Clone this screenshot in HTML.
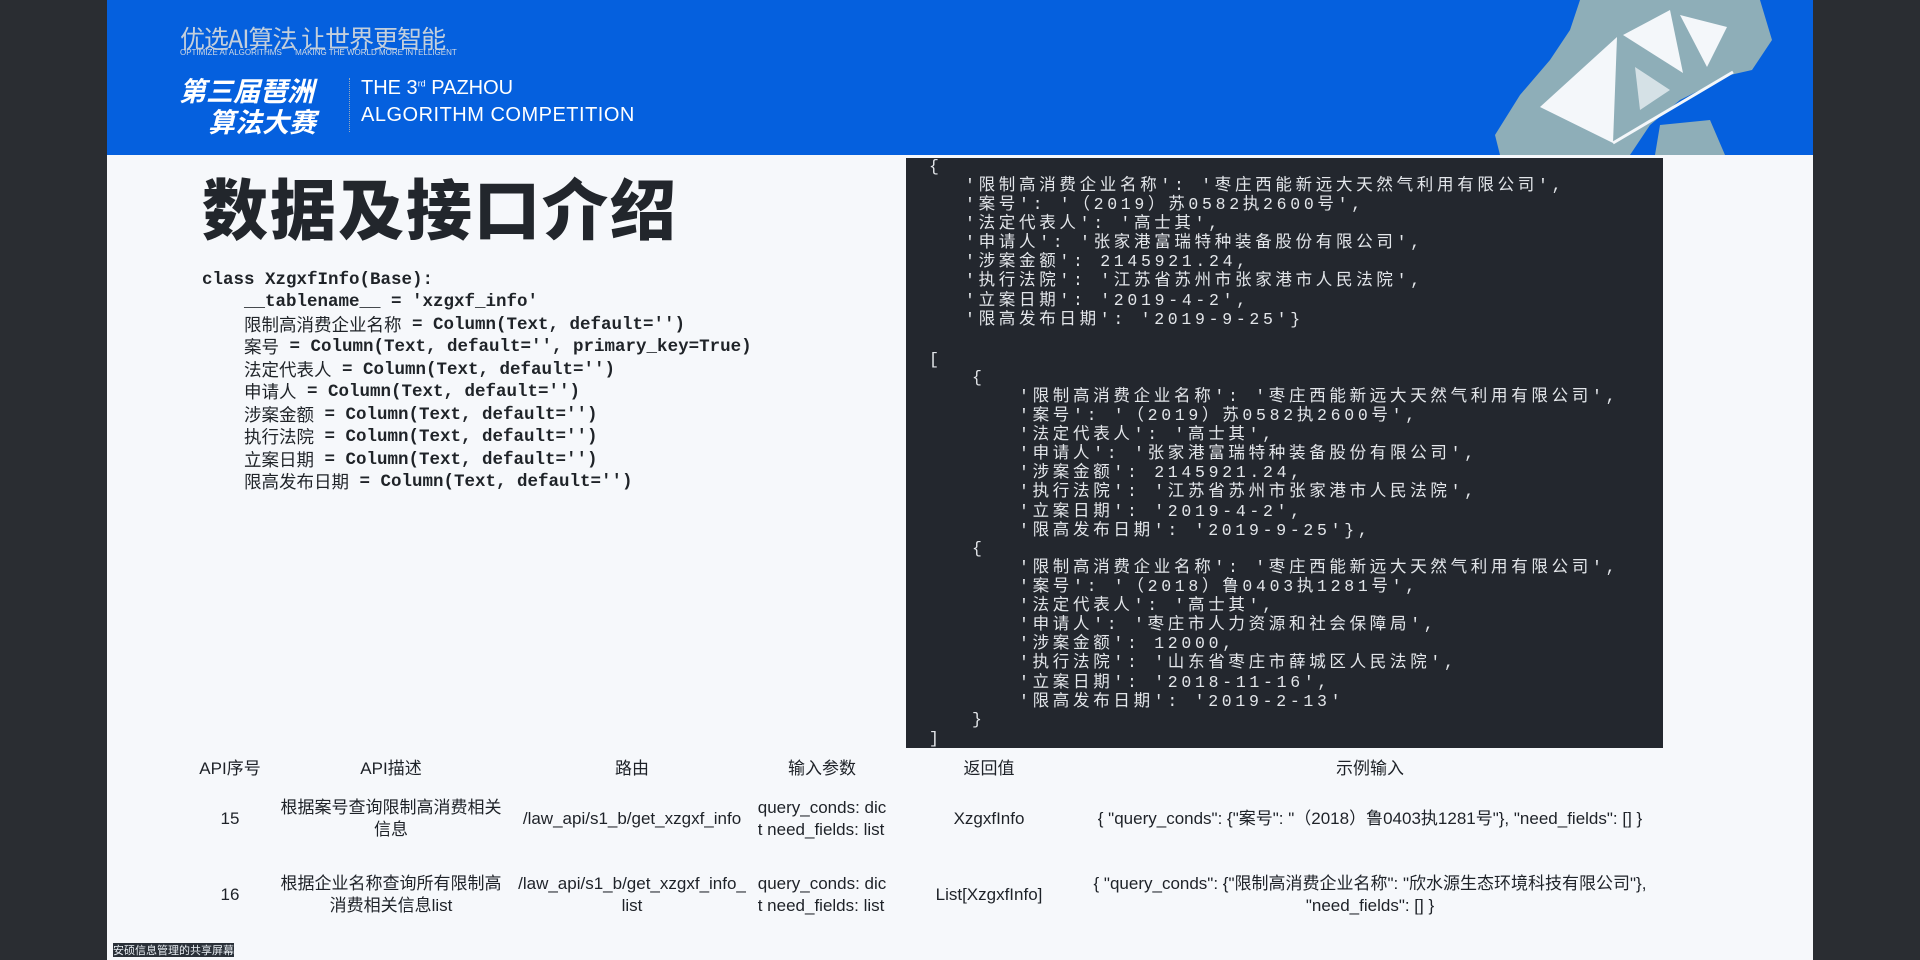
<!DOCTYPE html>
<html><head><meta charset="utf-8"><style>
*{margin:0;padding:0;box-sizing:border-box}
body{width:1920px;height:960px;background:#2a2d32;position:relative;overflow:hidden;font-family:"Liberation Sans","Noto Sans CJK SC",sans-serif}
#slide{position:absolute;left:107px;top:0;width:1706px;height:960px;background:#f6f8fb}
#hdr{position:absolute;left:0;top:0;width:1706px;height:155px;background:#0560de;overflow:hidden}
.a{position:absolute;white-space:pre}
#code{position:absolute;left:906px;top:158px;width:757px;height:590px;background:#23272e}
.pl{position:absolute;white-space:pre;color:#e3e6ea;font-family:"Liberation Mono","Noto Sans CJK SC",monospace;font-size:16.5px;letter-spacing:3.7px;line-height:19.1px}
.lc{position:absolute;white-space:pre;color:#1f2328;font-size:17.5px;font-weight:bold;font-family:"Liberation Mono","Noto Sans CJK SC",monospace;line-height:22px;height:22px}
.lc span{font-weight:normal;font-family:"Noto Sans CJK SC",sans-serif;display:inline-block;height:22px;line-height:22px;vertical-align:top}
.t{position:absolute;color:#1e2228;font-family:"Liberation Sans Narrow","Liberation Sans","Noto Sans CJK SC",sans-serif;font-size:17px;text-align:center;line-height:22px;transform:translateX(-50%);white-space:nowrap}
</style></head><body>
<div id="slide">
<div id="hdr">
 <div class="a" style="left:73px;top:20px;font-size:25px;color:#c3cfdc;letter-spacing:-1px;font-family:'Noto Sans CJK SC',sans-serif">优选AI算法 让世界更智能</div>
 <div class="a" style="left:73px;top:48px;font-size:8px;color:#d0d9e4">OPTIMIZE AI ALGORITHMS      MAKING THE WORLD MORE INTELLIGENT</div>
 <div class="a" style="left:72px;top:70px;font-size:27px;font-weight:bold;color:#fff;font-family:'Noto Sans CJK SC',sans-serif;font-style:italic">第三届琶洲</div>
 <div class="a" style="left:101px;top:101px;font-size:27px;font-weight:bold;color:#fff;font-family:'Noto Sans CJK SC',sans-serif;font-style:italic">算法大赛</div>
 <div style="position:absolute;left:242px;top:78px;height:54px;border-left:1px dotted #9ab"></div>
 <div class="a" style="left:254px;top:77px;font-size:20px;color:#fff">THE 3<sup style="font-size:9px">rd</sup> PAZHOU</div>
 <div class="a" style="left:254px;top:104px;font-size:20px;color:#fff;letter-spacing:0.5px">ALGORITHM COMPETITION</div>
 <svg style="position:absolute;left:1373px;top:0" width="333" height="155" viewBox="0 0 333 155">
  <path d="M100 0 L280 0 L292 40 L272 70 L250 75 L200 100 L170 125 L150 155 L20 155 L15 135 L40 95 L70 60 L90 30 Z" fill="#8eaeb8"/>
  <path d="M180 125 L230 120 L245 155 L175 155 Z" fill="#8eaeb8"/>
  <path d="M60 107 L137 37 L133 143 Z" fill="#f4f7fa"/>
  <path d="M143 35 L203 73 L190 10 Z" fill="#f4f7fa"/>
  <path d="M200 15 L227 67 L247 27 Z" fill="#f4f7fa"/>
  <path d="M155 67 L190 90 L160 110 Z" fill="#f4f7fa" opacity=".7"/>
  <path d="M133 143 L253 72" stroke="#f4f7fa" stroke-width="3"/>
 </svg>
</div>
<div class="a" style="left:95px;top:158px;font-size:66px;font-weight:900;color:#22262c;font-family:'Noto Sans CJK SC',sans-serif;letter-spacing:2px">数据及接口介绍</div>
</div>
<div class="lc" style="left:202px;top:269px">class XzgxfInfo(Base):</div>
<div class="lc" style="left:244px;top:291px">__tablename__ = 'xzgxf_info'</div>
<div class="lc" style="left:244px;top:314px"><span>限制高消费企业名称</span> = Column(Text, default='')</div>
<div class="lc" style="left:244px;top:336px"><span>案号</span> = Column(Text, default='', primary_key=True)</div>
<div class="lc" style="left:244px;top:359px"><span>法定代表人</span> = Column(Text, default='')</div>
<div class="lc" style="left:244px;top:381px"><span>申请人</span> = Column(Text, default='')</div>
<div class="lc" style="left:244px;top:404px"><span>涉案金额</span> = Column(Text, default='')</div>
<div class="lc" style="left:244px;top:426px"><span>执行法院</span> = Column(Text, default='')</div>
<div class="lc" style="left:244px;top:449px"><span>立案日期</span> = Column(Text, default='')</div>
<div class="lc" style="left:244px;top:471px"><span>限高发布日期</span> = Column(Text, default='')</div>
<div id="code"></div>
<div class="pl" style="left:929px;top:157px">{</div>
<div class="pl" style="left:965px;top:176px">'限制高消费企业名称': '枣庄西能新远大天然气利用有限公司',
'案号': '（2019）苏0582执2600号',
'法定代表人': '高士其',
'申请人': '张家港富瑞特种装备股份有限公司',
'涉案金额': 2145921.24,
'执行法院': '江苏省苏州市张家港市人民法院',
'立案日期': '2019-4-2',
'限高发布日期': '2019-9-25'}</div>
<div class="pl" style="left:929px;top:350px">[</div>
<div class="pl" style="left:972px;top:368px">{</div>
<div class="pl" style="left:1019px;top:387px">'限制高消费企业名称': '枣庄西能新远大天然气利用有限公司',
'案号': '（2019）苏0582执2600号',
'法定代表人': '高士其',
'申请人': '张家港富瑞特种装备股份有限公司',
'涉案金额': 2145921.24,
'执行法院': '江苏省苏州市张家港市人民法院',
'立案日期': '2019-4-2',
'限高发布日期': '2019-9-25'},</div>
<div class="pl" style="left:972px;top:539px">{</div>
<div class="pl" style="left:1019px;top:558px">'限制高消费企业名称': '枣庄西能新远大天然气利用有限公司',
'案号': '（2018）鲁0403执1281号',
'法定代表人': '高士其',
'申请人': '枣庄市人力资源和社会保障局',
'涉案金额': 12000,
'执行法院': '山东省枣庄市薛城区人民法院',
'立案日期': '2018-11-16',
'限高发布日期': '2019-2-13'</div>
<div class="pl" style="left:972px;top:710px">}</div>
<div class="pl" style="left:929px;top:729px">]</div>

<div class="t" style="left:230px;top:758px">API序号</div>
<div class="t" style="left:391px;top:758px">API描述</div>
<div class="t" style="left:632px;top:758px">路由</div>
<div class="t" style="left:822px;top:758px">输入参数</div>
<div class="t" style="left:989px;top:758px">返回值</div>
<div class="t" style="left:1370px;top:758px">示例输入</div>

<div class="t" style="left:230px;top:808px">15</div>
<div class="t" style="left:391px;top:797px">根据案号查询限制高消费相关<br>信息</div>
<div class="t" style="left:632px;top:808px">/law_api/s1_b/get_xzgxf_info</div>
<div class="t" style="left:822px;top:797px;text-align:left">query_conds: dic<br>t need_fields: list</div>
<div class="t" style="left:989px;top:808px">XzgxfInfo</div>
<div class="t" style="left:1370px;top:808px">{ "query_conds": {"案号": "（2018）鲁0403执1281号"}, "need_fields": [] }</div>

<div class="t" style="left:230px;top:884px">16</div>
<div class="t" style="left:391px;top:873px">根据企业名称查询所有限制高<br>消费相关信息list</div>
<div class="t" style="left:632px;top:873px">/law_api/s1_b/get_xzgxf_info_<br>list</div>
<div class="t" style="left:822px;top:873px;text-align:left">query_conds: dic<br>t need_fields: list</div>
<div class="t" style="left:989px;top:884px">List[XzgxfInfo]</div>
<div class="t" style="left:1370px;top:873px">{ "query_conds": {"限制高消费企业名称": "欣水源生态环境科技有限公司"},<br>"need_fields": [] }</div>

<div class="a" style="left:113px;top:943px;width:121px;height:14px;background:#2a3038;color:#e8edf2;font-size:11px;line-height:14px;font-family:'Noto Sans CJK SC',sans-serif">安硕信息管理的共享屏幕</div>
</body></html>
